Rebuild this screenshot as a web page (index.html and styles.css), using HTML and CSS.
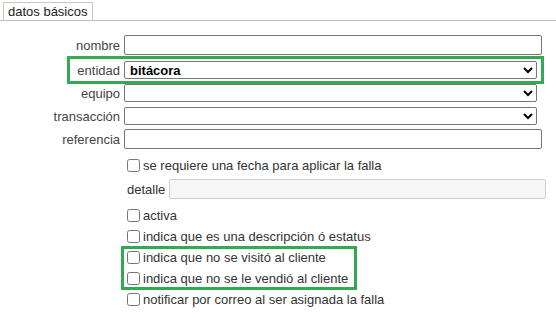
FILE: index.html
```html
<!DOCTYPE html>
<html lang="es">
<head>
<meta charset="utf-8">
<title>datos básicos</title>
<link rel="stylesheet" href="styles.css">
</head>
<body>
<div class="tabs"><span class="tab">datos básicos</span></div>
<form class="form">
  <div class="row row-nombre">
    <label class="lbl">nombre</label>
    <input class="txt" type="text">
  </div>
  <div class="row row-sel highlight-row">
    <label class="lbl">entidad</label>
    <select class="sel sel-bold"><option>bitácora</option></select>
    <span class="hl hl-entidad"></span>
  </div>
  <div class="row row-sel">
    <label class="lbl">equipo</label>
    <select class="sel"><option></option></select>
  </div>
  <div class="row row-sel">
    <label class="lbl">transacción</label>
    <select class="sel"><option></option></select>
  </div>
  <div class="row">
    <label class="lbl">referencia</label>
    <input class="txt" type="text">
  </div>

  <div class="checks">
    <label class="chk chk-first"><input type="checkbox"><span>se requiere una fecha para aplicar la falla</span></label>
    <div class="detalle"><span class="dlbl">detalle</span><input class="dtxt" type="text" disabled></div>
    <label class="chk chk-activa"><input type="checkbox"><span>activa</span></label>
    <label class="chk"><input type="checkbox"><span>indica que es una descripción ó estatus</span></label>
    <div class="group">
      <label class="chk"><input type="checkbox"><span>indica que no se visitó al cliente</span></label>
      <label class="chk"><input type="checkbox"><span>indica que no se le vendió al cliente</span></label>
      <span class="hl hl-group"></span>
    </div>
    <label class="chk"><input type="checkbox"><span>notificar por correo al ser asignada la falla</span></label>
  </div>
</form>
</body>
</html>
```
FILE: styles.css
```css
* { box-sizing: border-box; }
html, body { margin: 0; padding: 0; background: #fff; }
body {
  font-family: "Liberation Sans", Arial, sans-serif;
  font-size: 13px;
  color: #333;
  width: 556px;
  height: 335px;
  overflow: hidden;
}
.tabs {
  padding: 2px 0 0 3px;
  border-bottom: 1px solid #bdbdbd;
  height: 21px;
}
.tab {
  display: inline-block;
  border: 1px solid #c8c8c8;
  border-bottom: none;
  padding: 1px 4px 1px 4px;
  line-height: 16px;
  height: 18px;
  color: #222;
  background: #fff;
}
.form {
  display: flex;
  flex-direction: column;
  padding-top: 14px;
}
.row {
  display: flex;
  align-items: center;
  position: relative;
  margin-bottom: 5px;
}
.row-sel { margin-top: 1px; margin-bottom: 4px; }
.lbl {
  width: 120px;
  text-align: right;
  margin-right: 4px;
  color: #444;
}
.txt {
  width: 418px;
  height: 20px;
  border: 1px solid #767676;
  border-radius: 2px;
  padding: 0 3px;
  font: inherit;
  background: #fff;
}
.sel {
  width: 413px;
  height: 18px;
  border: 1px solid #767676;
  border-radius: 2px;
  font: inherit;
  font-size: 13px;
  color: #000;
  background: #fff;
  padding: 0 1px;
}
.sel-bold { font-weight: bold; }
.hl {
  position: absolute;
  border: 3px solid #34a853;
  pointer-events: none;
}
.hl-entidad {
  left: 67px;
  top: -5px;
  width: 477px;
  height: 28px;
}
.checks {
  display: flex;
  flex-direction: column;
  padding-left: 124px;
  margin-top: 1px;
}
.chk {
  display: flex;
  align-items: center;
  height: 21px;
  color: #333;
}
.chk input {
  margin: 0 3px 0 3px;
  width: 13px;
  height: 13px;
}
.detalle {
  display: flex;
  align-items: center;
  height: 20px;
  margin: 3px 0 6px 0;
}
.dlbl { margin-left: 3px; width: 42px; color: #333; }
.dtxt {
  width: 377px;
  height: 20px;
  border: 1px solid #cfcfcf;
  border-radius: 2px;
  background: #f6f6f6;
}
.group { position: relative; }
.hl-group {
  left: -3px;
  top: -1px;
  width: 236px;
  height: 44px;
}
```
